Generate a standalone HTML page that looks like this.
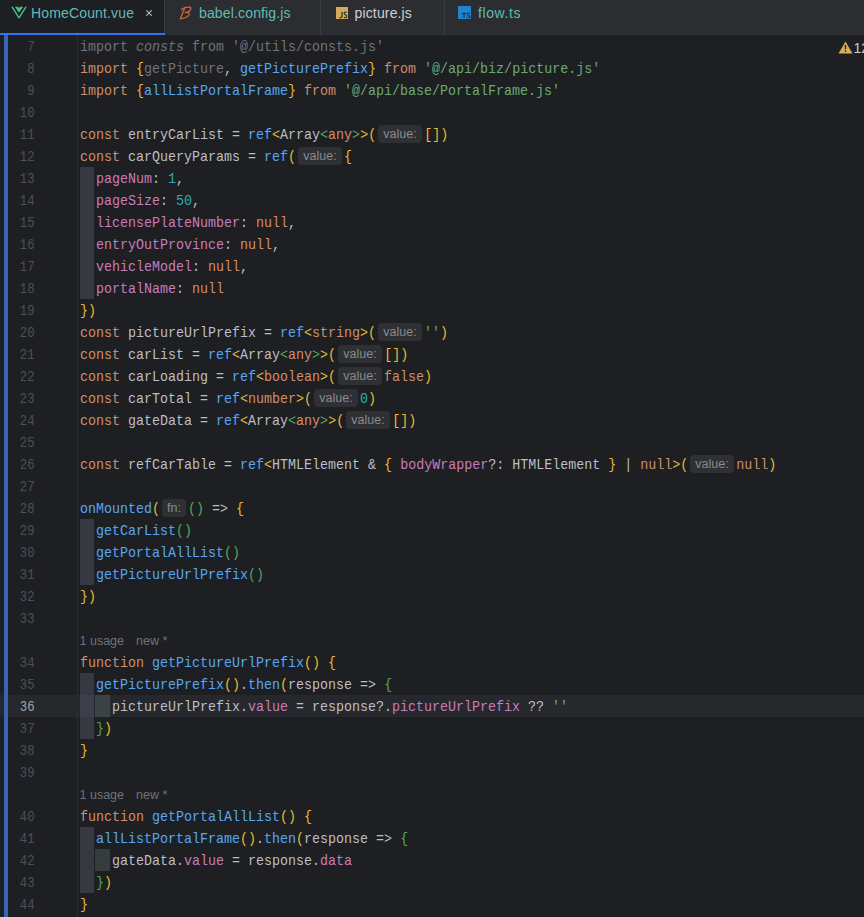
<!DOCTYPE html>
<html><head><meta charset="utf-8"><style>
html,body{margin:0;padding:0;}
body{width:864px;height:917px;overflow:hidden;background:#1E1F22;position:relative;font-family:"Liberation Sans",sans-serif;}
.tabs{position:absolute;left:0;top:0;width:864px;height:35px;background:#2B2D30;}
.tabs .bb{position:absolute;left:0;top:34px;width:864px;height:1px;background:#2F3134;}
.tab{position:absolute;top:0;height:35px;}
.tab .t{position:absolute;top:5px;font-size:14px;letter-spacing:0.15px;line-height:16px;white-space:nowrap;color:#62BAB8;}
.tab.active{background:#1E1F22;z-index:4;}
.tab .ul{position:absolute;left:0;bottom:0;height:2px;background:#3574F0;}
.sep{position:absolute;top:0;width:1px;height:35px;background:#393B40;}
.editor{position:absolute;left:0;top:35px;width:864px;height:882px;}
.row{position:absolute;left:0;width:864px;height:22px;}
.editor .row{margin-top:-35px;}
.row.cur{background:#26282E;}
.vcs{position:absolute;left:4px;top:0;width:4px;height:882px;background:#3A63B2;z-index:3;}
.gline{position:absolute;left:77px;top:0;width:1px;height:882px;background:#2B2D30;z-index:2;}
.ln{position:absolute;left:0;width:34.5px;text-align:right;top:2px;transform:scaleX(0.88889);transform-origin:100% 0;font-family:"Liberation Mono",monospace;font-size:13.8px;line-height:22px;color:#4B5059;}
.cur .ln{color:#A1A3AB;}
.code{position:absolute;left:80px;top:2px;font-family:"Liberation Mono",monospace;font-size:15px;line-height:22px;white-space:pre;color:#BCBEC4;transform:scaleX(0.88889);transform-origin:0 0;}
.sp{display:inline-block;height:1px;}
.b1{position:absolute;left:80px;top:0;width:14px;height:22px;background:rgba(186,187,234,0.16);}
.b2{position:absolute;left:95px;top:0;width:15px;height:22px;background:rgba(167,218,196,0.16);}
.k{color:#CF8E6D}.s{color:#6AAB73}.n{color:#2AACB8}.f{color:#56A8F5}.p{color:#C77DBB}.d{color:#BCBEC4}
.u{color:#6F737A}.ui{color:#6F737A;font-style:italic}.g{color:#E8BA36}.r{color:#54A857}
.hint{position:absolute;top:2px;font-family:"Liberation Sans",sans-serif;font-size:12.5px;line-height:18px;height:18px;text-align:center;background:#2F3034;color:#868A91;border-radius:4px;}
.usage{position:absolute;left:79.5px;top:1px;font-size:12.5px;line-height:22px;color:#6F737A;white-space:pre;}
.usage .new{margin-left:12px;}
.warn{position:absolute;left:838px;top:6px;height:14px;}
.warn svg{position:absolute;left:0;top:0;}
.warn span{position:absolute;left:15.5px;top:-1px;font-size:14px;line-height:16px;color:#C9CCD2;}

</style></head><body>
<div class="tabs">
<div class="bb"></div>
<div class="tab active" style="left:0;width:164px">
 <svg style="position:absolute;left:11px;top:6.4px" width="16" height="14" viewBox="0 0 16 14"><path d="M1.2 1.2 L8 11.9 L14.8 1.2" fill="none" stroke="#47C48B" stroke-width="1.35" stroke-linecap="round" stroke-linejoin="round"/><path d="M3.9 0.8 L7.1 0.8 L8 2.5 L8.9 0.8 L12.1 0.8 L8 6.7 Z" fill="#47C48B"/></svg>
 <span class="t" style="left:31px">HomeCount.vue</span>
 <svg style="position:absolute;left:145px;top:9px" width="8" height="8" viewBox="0 0 8 8"><path d="M1.6 1.6 L6.4 6.4 M6.4 1.6 L1.6 6.4" stroke="#A6B0B8" stroke-width="1.25" stroke-linecap="round"/></svg>
 <div class="ul" style="width:165px;z-index:5"></div>
</div>
<div class="sep" style="left:164px"></div>
<div class="tab" style="left:165px;width:155px">
 <svg style="position:absolute;left:11px;top:3px" width="20" height="20" viewBox="0 0 20 20"><path d="M5.3 6.5 C7.5 5, 11.5 3.8, 14.3 4.3 C15.6 5.2, 14.3 8.2, 11.8 8.9 L9.3 9.3 C12.8 9.1, 14 10.6, 12.6 12.6 C11 14.5, 7.5 15.3, 4.3 15.8 M8.6 5.2 L4.3 15.9" fill="none" stroke="#D8623A" stroke-width="1.3" stroke-linecap="round" stroke-linejoin="round"/></svg>
 <span class="t" style="left:34px">babel.config.js</span>
</div>
<div class="sep" style="left:320px"></div>
<div class="tab" style="left:321px;width:123px">
 <svg style="position:absolute;left:15px;top:7px" width="12" height="12" viewBox="0 0 12 12"><rect x="0" y="0" width="12" height="12" fill="#D2AA5C"/><path d="M6 5 L6 9.3 Q6 10.7 4.6 10.7 L3.5 10.7" fill="none" stroke="#2B2D30" stroke-width="1.2"/><path d="M10.6 5.7 Q10.1 5 9.3 5 Q8.1 5 8.1 6.3 Q8.1 7.3 9.4 7.8 Q10.8 8.3 10.8 9.4 Q10.8 10.7 9.3 10.7 Q8.5 10.7 8 10" fill="none" stroke="#2B2D30" stroke-width="1.1"/></svg>
 <span class="t" style="left:33.5px;color:#CED0D6">picture.js</span>
</div>
<div class="sep" style="left:444px"></div>
<div class="tab" style="left:445px;width:419px">
 <svg style="position:absolute;left:13.4px;top:6.4px" width="13" height="13" viewBox="0 0 13 13"><rect x="0" y="0" width="13" height="13" fill="#2384CC"/><path d="M3.8 7.3 L8.2 7.3 M6 7.3 L6 11.8" fill="none" stroke="#263244" stroke-width="1.3"/><path d="M11.8 7.8 Q11.3 7.1 10.5 7.1 Q9.2 7.1 9.2 8.2 Q9.2 9.1 10.5 9.5 Q11.9 9.9 11.9 10.8 Q11.9 11.8 10.5 11.8 Q9.6 11.8 9 11.2" fill="none" stroke="#263244" stroke-width="1.1"/></svg>
 <span class="t" style="left:33px;letter-spacing:0.6px">flow.ts</span>
</div>
</div>

<div class="editor">
<div class="gline"></div>
<div class="vcs"></div>
<div class="row" style="top:35px"><span class="ln">7</span><div class="code"><span class="u">import </span><span class="ui">consts</span><span class="u"> from &#x27;@/utils/consts.js&#x27;</span></div></div><div class="row" style="top:57px"><span class="ln">8</span><div class="code"><span class="k">import </span><span class="g">{</span><span class="u">getPicture</span><span class="d">, </span><span class="f">getPicturePrefix</span><span class="g">}</span><span class="k"> from </span><span class="s">&#x27;@/api/biz/picture.js&#x27;</span></div></div><div class="row" style="top:79px"><span class="ln">9</span><div class="code"><span class="k">import </span><span class="g">{</span><span class="f">allListPortalFrame</span><span class="g">}</span><span class="k"> from </span><span class="s">&#x27;@/api/base/PortalFrame.js&#x27;</span></div></div><div class="row" style="top:101px"><span class="ln">10</span><div class="code"></div></div><div class="row" style="top:123px"><span class="ln">11</span><div class="code"><span class="k">const </span><span class="d">entryCarList = </span><span class="f">ref</span><span class="g">&lt;</span><span class="d">Array</span><span class="r">&lt;</span><span class="k">any</span><span class="r">&gt;</span><span class="g">&gt;(</span><i class="sp" style="width:54.000px"></i><span class="g">[])</span></div><span class="hint" style="left:378px;width:44px">value:</span></div><div class="row" style="top:145px"><span class="ln">12</span><div class="code"><span class="k">const </span><span class="d">carQueryParams = </span><span class="f">ref</span><span class="g">(</span><i class="sp" style="width:54.000px"></i><span class="g">{</span></div><span class="hint" style="left:298px;width:44px">value:</span></div><div class="row" style="top:167px"><i class="b1"></i><span class="ln">13</span><div class="code"><span class="d">  </span><span class="p">pageNum</span><span class="d">: </span><span class="n">1</span><span class="d">,</span></div></div><div class="row" style="top:189px"><i class="b1"></i><span class="ln">14</span><div class="code"><span class="d">  </span><span class="p">pageSize</span><span class="d">: </span><span class="n">50</span><span class="d">,</span></div></div><div class="row" style="top:211px"><i class="b1"></i><span class="ln">15</span><div class="code"><span class="d">  </span><span class="p">licensePlateNumber</span><span class="d">: </span><span class="k">null</span><span class="d">,</span></div></div><div class="row" style="top:233px"><i class="b1"></i><span class="ln">16</span><div class="code"><span class="d">  </span><span class="p">entryOutProvince</span><span class="d">: </span><span class="k">null</span><span class="d">,</span></div></div><div class="row" style="top:255px"><i class="b1"></i><span class="ln">17</span><div class="code"><span class="d">  </span><span class="p">vehicleModel</span><span class="d">: </span><span class="k">null</span><span class="d">,</span></div></div><div class="row" style="top:277px"><i class="b1"></i><span class="ln">18</span><div class="code"><span class="d">  </span><span class="p">portalName</span><span class="d">: </span><span class="k">null</span></div></div><div class="row" style="top:299px"><span class="ln">19</span><div class="code"><span class="g">})</span></div></div><div class="row" style="top:321px"><span class="ln">20</span><div class="code"><span class="k">const </span><span class="d">pictureUrlPrefix = </span><span class="f">ref</span><span class="g">&lt;</span><span class="k">string</span><span class="g">&gt;(</span><i class="sp" style="width:54.000px"></i><span class="s">&#x27;&#x27;</span><span class="g">)</span></div><span class="hint" style="left:378px;width:44px">value:</span></div><div class="row" style="top:343px"><span class="ln">21</span><div class="code"><span class="k">const </span><span class="d">carList = </span><span class="f">ref</span><span class="g">&lt;</span><span class="d">Array</span><span class="r">&lt;</span><span class="k">any</span><span class="r">&gt;</span><span class="g">&gt;(</span><i class="sp" style="width:54.000px"></i><span class="g">[])</span></div><span class="hint" style="left:338px;width:44px">value:</span></div><div class="row" style="top:365px"><span class="ln">22</span><div class="code"><span class="k">const </span><span class="d">carLoading = </span><span class="f">ref</span><span class="g">&lt;</span><span class="k">boolean</span><span class="g">&gt;(</span><i class="sp" style="width:54.000px"></i><span class="k">false</span><span class="g">)</span></div><span class="hint" style="left:338px;width:44px">value:</span></div><div class="row" style="top:387px"><span class="ln">23</span><div class="code"><span class="k">const </span><span class="d">carTotal = </span><span class="f">ref</span><span class="g">&lt;</span><span class="k">number</span><span class="g">&gt;(</span><i class="sp" style="width:54.000px"></i><span class="n">0</span><span class="g">)</span></div><span class="hint" style="left:314px;width:44px">value:</span></div><div class="row" style="top:409px"><span class="ln">24</span><div class="code"><span class="k">const </span><span class="d">gateData = </span><span class="f">ref</span><span class="g">&lt;</span><span class="d">Array</span><span class="r">&lt;</span><span class="k">any</span><span class="r">&gt;</span><span class="g">&gt;(</span><i class="sp" style="width:54.000px"></i><span class="g">[])</span></div><span class="hint" style="left:346px;width:44px">value:</span></div><div class="row" style="top:431px"><span class="ln">25</span><div class="code"></div></div><div class="row" style="top:453px"><span class="ln">26</span><div class="code"><span class="k">const </span><span class="d">refCarTable = </span><span class="f">ref</span><span class="g">&lt;</span><span class="d">HTMLElement &amp; </span><span class="g">{</span><span class="d"> </span><span class="p">bodyWrapper</span><span class="d">?: HTMLElement </span><span class="g">}</span><span class="d"> | </span><span class="k">null</span><span class="g">&gt;(</span><i class="sp" style="width:54.000px"></i><span class="k">null</span><span class="g">)</span></div><span class="hint" style="left:690px;width:44px">value:</span></div><div class="row" style="top:475px"><span class="ln">27</span><div class="code"></div></div><div class="row" style="top:497px"><span class="ln">28</span><div class="code"><span class="f">onMounted</span><span class="g">(</span><i class="sp" style="width:31.500px"></i><span class="r">()</span><span class="d"> =&gt; </span><span class="g">{</span></div><span class="hint" style="left:162px;width:24px">fn:</span></div><div class="row" style="top:519px"><i class="b1"></i><span class="ln">29</span><div class="code"><span class="d">  </span><span class="f">getCarList</span><span class="r">()</span></div></div><div class="row" style="top:541px"><i class="b1"></i><span class="ln">30</span><div class="code"><span class="d">  </span><span class="f">getPortalAllList</span><span class="r">()</span></div></div><div class="row" style="top:563px"><i class="b1"></i><span class="ln">31</span><div class="code"><span class="d">  </span><span class="f">getPictureUrlPrefix</span><span class="r">()</span></div></div><div class="row" style="top:585px"><span class="ln">32</span><div class="code"><span class="g">})</span></div></div><div class="row" style="top:607px"><span class="ln">33</span><div class="code"></div></div><div class="row" style="top:629px"><div class="usage">1 usage<span class="new">new *</span></div></div><div class="row" style="top:651px"><span class="ln">34</span><div class="code"><span class="k">function </span><span class="f">getPictureUrlPrefix</span><span class="g">() {</span></div></div><div class="row" style="top:673px"><i class="b1"></i><span class="ln">35</span><div class="code"><span class="d">  </span><span class="f">getPicturePrefix</span><span class="g">()</span><span class="d">.</span><span class="f">then</span><span class="g">(</span><span class="d">response =&gt; </span><span class="r">{</span></div></div><div class="row cur" style="top:695px"><i class="b1"></i><i class="b2"></i><span class="ln">36</span><div class="code"><span class="d">    pictureUrlPrefix.</span><span class="p">value</span><span class="d"> = response?.</span><span class="p">pictureUrlPrefix</span><span class="d"> ?? </span><span class="s">&#x27;&#x27;</span></div></div><div class="row" style="top:717px"><i class="b1"></i><span class="ln">37</span><div class="code"><span class="d">  </span><span class="r">}</span><span class="g">)</span></div></div><div class="row" style="top:739px"><span class="ln">38</span><div class="code"><span class="g">}</span></div></div><div class="row" style="top:761px"><span class="ln">39</span><div class="code"></div></div><div class="row" style="top:783px"><div class="usage">1 usage<span class="new">new *</span></div></div><div class="row" style="top:805px"><span class="ln">40</span><div class="code"><span class="k">function </span><span class="f">getPortalAllList</span><span class="g">() {</span></div></div><div class="row" style="top:827px"><i class="b1"></i><span class="ln">41</span><div class="code"><span class="d">  </span><span class="f">allListPortalFrame</span><span class="g">()</span><span class="d">.</span><span class="f">then</span><span class="g">(</span><span class="d">response =&gt; </span><span class="r">{</span></div></div><div class="row" style="top:849px"><i class="b1"></i><i class="b2"></i><span class="ln">42</span><div class="code"><span class="d">    gateData.</span><span class="p">value</span><span class="d"> = response.</span><span class="p">data</span></div></div><div class="row" style="top:871px"><i class="b1"></i><span class="ln">43</span><div class="code"><span class="d">  </span><span class="r">}</span><span class="g">)</span></div></div><div class="row" style="top:893px"><span class="ln">44</span><div class="code"><span class="g">}</span></div></div><div class="row" style="top:915px"><span class="ln"></span><div class="code"></div></div>
<div class="warn"><svg width="15" height="13" viewBox="0 0 15 13"><path d="M7.5 0.5 L14.5 12.5 L0.5 12.5 Z" fill="#D6AE58"/><rect x="6.8" y="4" width="1.4" height="4.2" fill="#1E1F22"/><rect x="6.8" y="9.3" width="1.4" height="1.5" fill="#1E1F22"/></svg><span>12</span></div>
</div>
</body></html>
